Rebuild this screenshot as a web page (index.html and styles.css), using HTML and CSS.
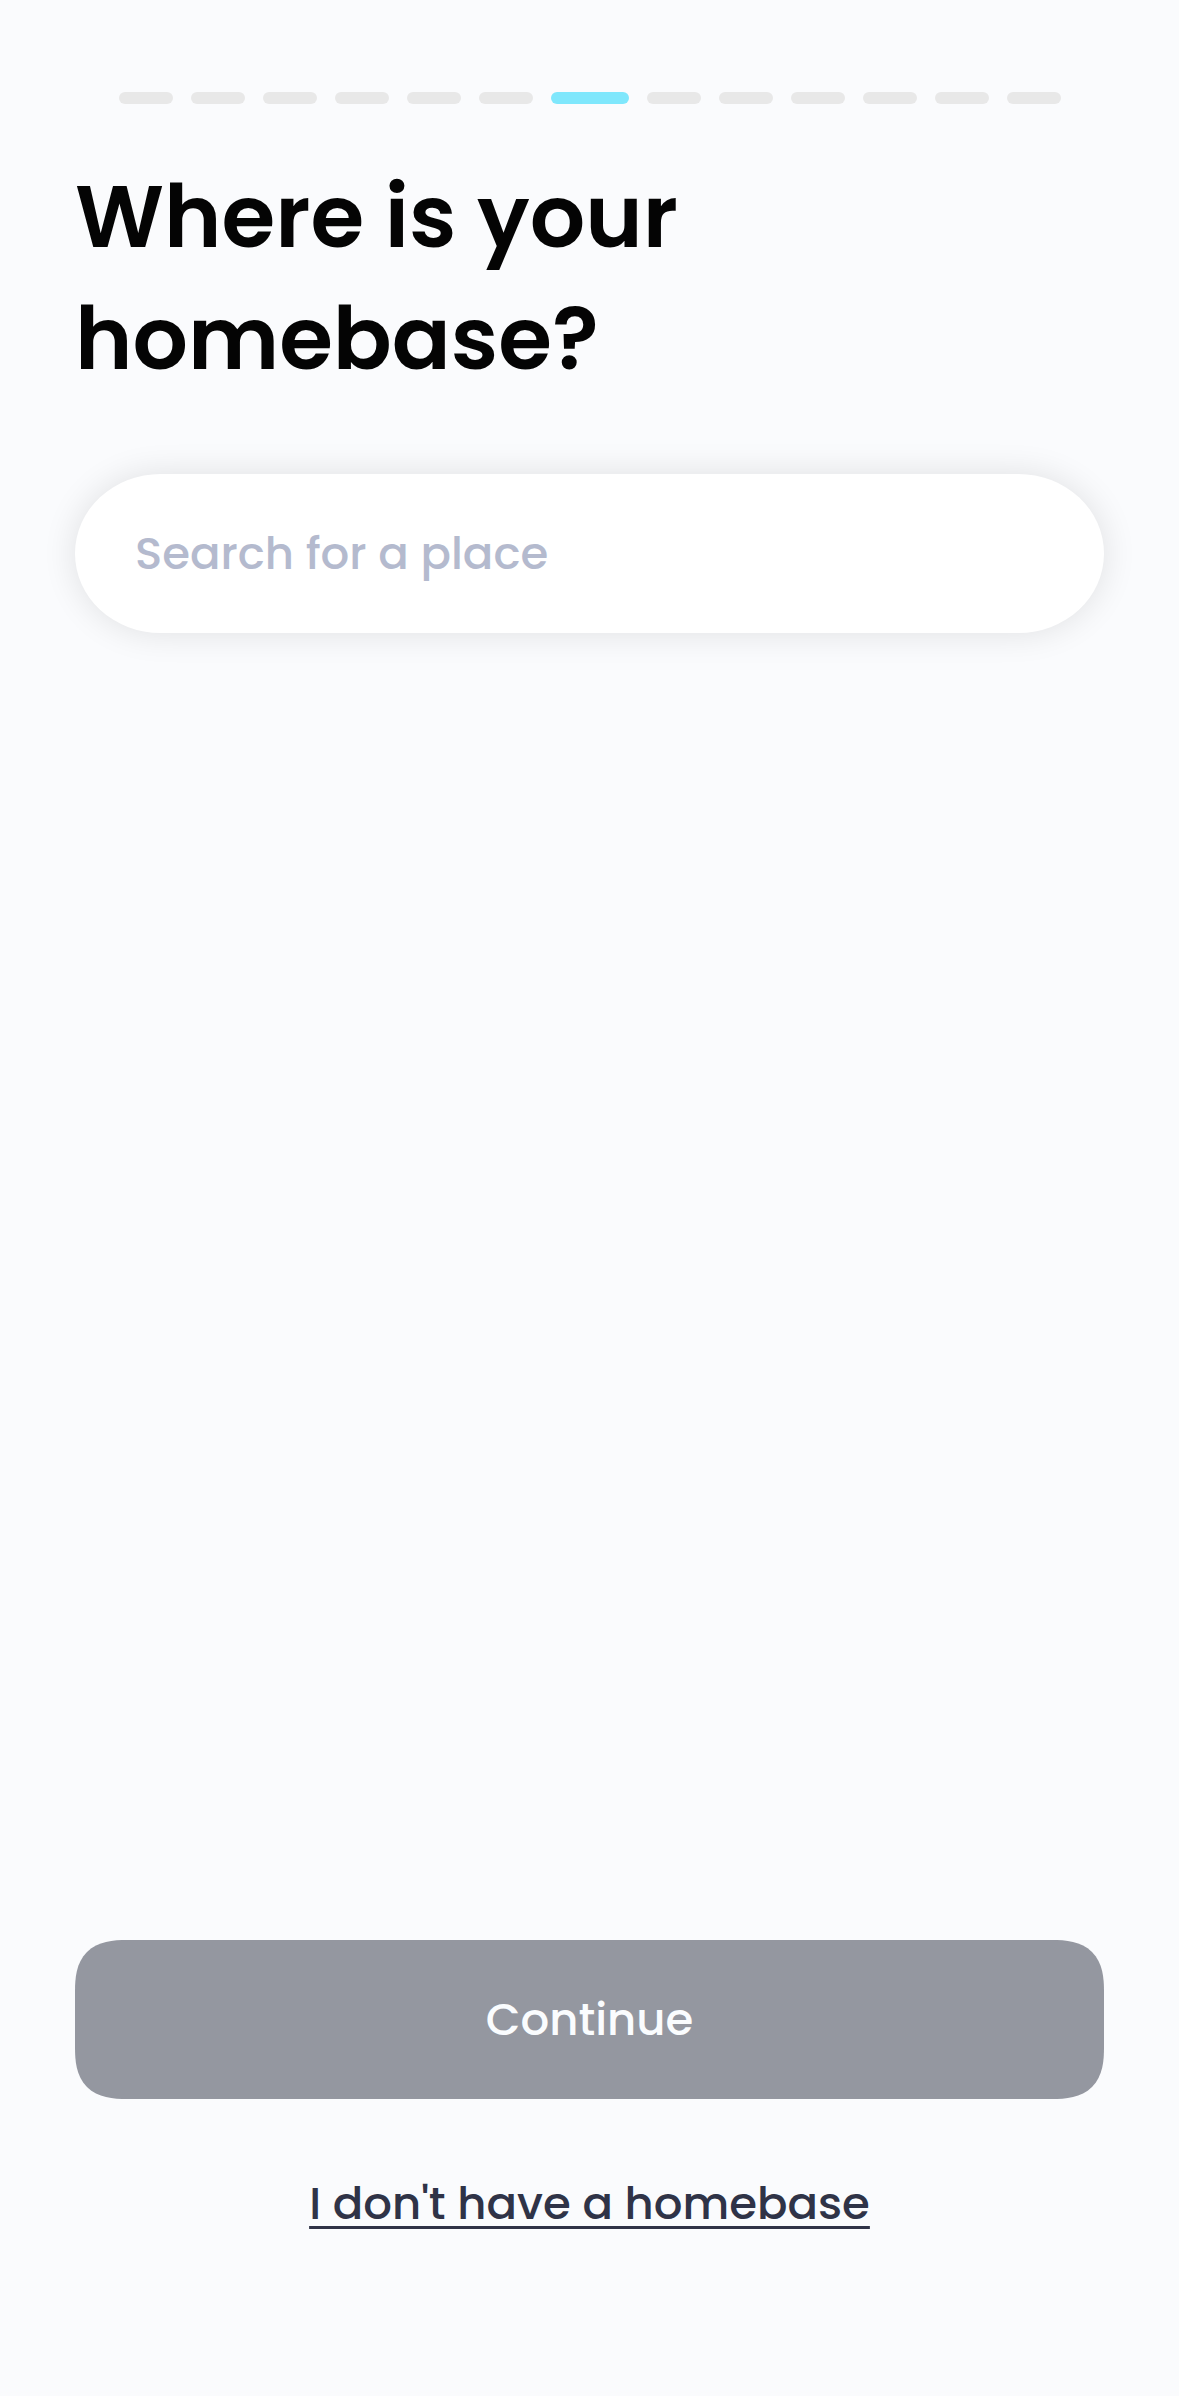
FILE: index.html
```html
<!DOCTYPE html>
<html lang="en">
<head>
  <meta charset="UTF-8">
  <meta name="viewport" content="width=device-width, initial-scale=1">
  <title>Where is your homebase?</title>
  <link rel="stylesheet" href="styles.css">
</head>
<body>
  <main class="screen">
    <div class="steps" role="progressbar" aria-label="Step" aria-valuemin="1" aria-valuemax="13" aria-valuenow="7">
      <span class="step"></span>
      <span class="step"></span>
      <span class="step"></span>
      <span class="step"></span>
      <span class="step"></span>
      <span class="step"></span>
      <span class="step active"></span>
      <span class="step"></span>
      <span class="step"></span>
      <span class="step"></span>
      <span class="step"></span>
      <span class="step"></span>
      <span class="step"></span>
    </div>

    <h1><label for="place">Where is your<br>homebase?</label></h1>
    <input class="search" id="place" type="text" placeholder="Search for a place">

    <div class="actions">
      <button class="continue" type="button" disabled>Continue</button>
      <a class="skip" href="#">I don't have a homebase</a>
    </div>
  </main>
</body>
</html>
```
FILE: styles.css
```css
* { box-sizing: border-box; }
body {
  margin: 0;
  background: #fafbfd;
  color: #040404;
  font-family: Poppins, Inter, sans-serif;
}
.screen {
  display: flex;
  flex-direction: column;
  min-height: 100vh;
  padding: 92px 75px 160px;
}
.steps {
  display: flex;
  justify-content: center;
  gap: 18px;
  margin-bottom: 52px;
}
.step {
  width: 54px;
  height: 12px;
  border-radius: 6px;
  background: #e8e8e8;
}
.step.active {
  width: 78px;
  background: #7fe7fc;
}
h1 {
  margin: 0 0 74px;
  font-size: 87px;
  font-weight: 600;
  line-height: 122px;
}
.search {
  width: 100%;
  height: 159px;
  padding: 0 60px;
  border: none;
  border-radius: 86px / 80px;
  background: #fff;
  box-shadow: 0 0 34px rgba(0, 0, 0, 0.11);
  font-family: inherit;
  font-size: 45px;
  font-weight: 500;
}
.search::placeholder {
  color: #b4bace;
  opacity: 1;
}
.actions {
  display: flex;
  flex-direction: column;
  align-items: center;
  gap: 73px;
  margin-top: auto;
}
.continue {
  width: 100%;
  height: 159px;
  border: none;
  border-radius: 40px;
  background: #9497a0;
  color: #fafcfe;
  font-family: inherit;
  font-size: 45px;
  font-weight: 500;
}
@supports (corner-shape: superellipse(1.4)) {
  .continue {
    border-radius: 52px;
    corner-shape: superellipse(1.4);
  }
}
.skip {
  color: #2f3347;
  font-size: 45px;
  font-weight: 500;
  line-height: 64px;
  text-decoration-thickness: 3px;
  text-underline-offset: 7px;
}
```
